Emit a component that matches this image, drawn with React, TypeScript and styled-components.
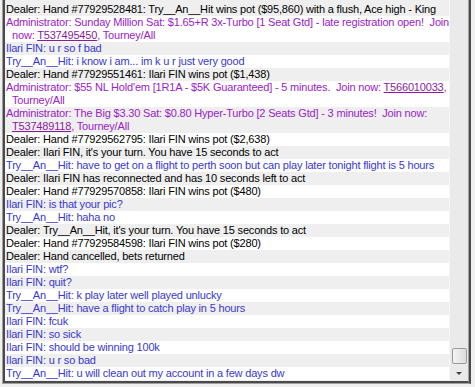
import React from "react";
import styled, { createGlobalStyle } from "styled-components";

const Global = createGlobalStyle`
  html, body { margin: 0; padding: 0; background: #f0f0f0; }
  body { width: 475px; height: 387px; overflow: hidden; }
`;

const Page = styled.div`
  width: 475px;
  height: 387px;
  padding-left: 2px;
  box-sizing: border-box;
  background: #f0f0f0;
`;

const Frame = styled.div`
  width: 469px;
  height: 384px;
  box-sizing: border-box;
  border-left: 1px solid #a0a0a0;
  border-right: 2px solid #4a4a4a;
  border-bottom: 1px solid #a0a0a0;
  display: flex;
`;

const Inner = styled.div`
  flex: 1;
  display: flex;
  box-sizing: border-box;
  border-left: 2px solid #4a4a4a;
  border-right: 1px solid #a0a0a0;
  border-bottom: 2px solid #4a4a4a;
  min-width: 0;
`;

const ChatList = styled.div`
  flex: 1;
  min-width: 0;
  overflow: hidden;
  display: flex;
  flex-direction: column;
  font-family: "Liberation Sans", Arial, sans-serif;
  font-size: 11px;
  letter-spacing: -0.18px;
  line-height: 13px;
`;

const Entry = styled.div<{ $shade: boolean; $color: string; $first?: boolean }>`
  background: ${(p) => (p.$shade ? "#efefef" : "#ffffff")};
  color: ${(p) => p.$color};
  padding: ${(p) => (p.$first ? "3px" : "0")} 0 0 1px;
  white-space: pre;
`;

const Line = styled.div<{ $indent?: boolean }>`
  height: 13px;
  padding-left: ${(p) => (p.$indent ? "6px" : "0")};
`;

const Link = styled.span`
  color: #8a1a9e;
  text-decoration: underline;
`;

const Scrollbar = styled.div`
  width: 18px;
  display: flex;
  flex-direction: column;
  background: #eaeaea;
  border-left: 1px solid #f6f6f6;
`;

const Track = styled.div`
  flex: 1;
  display: flex;
  flex-direction: column;
  justify-content: flex-end;
  align-items: center;
`;

const Thumb = styled.div`
  width: 13px;
  height: 14px;
  border: 1px solid #9a9a9a;
  border-radius: 2px;
  background: linear-gradient(to right, #f4f4f4, #dcdcdc);
`;

const ArrowButton = styled.div`
  height: 17px;
  display: flex;
  align-items: center;
  justify-content: center;
`;

const Arrow = styled.div`
  width: 0;
  height: 0;
  border-left: 3px solid transparent;
  border-right: 3px solid transparent;
  border-top: 3px solid #404040;
  margin-top: 2px;
`;

const DEALER = "#000000";
const ADMIN = "#9a22c8";
const PLAYER = "#3838d0";

type Msg = { color: string; lines: React.ReactNode[] };

const msgs: Msg[] = [
  { color: DEALER, lines: ["Dealer: Hand #77929528481: Try__An__Hit wins pot ($95,860) with a flush, Ace high - King"] },
  {
    color: ADMIN,
    lines: [
      "Administrator: Sunday Million Sat: $1.65+R 3x-Turbo [1 Seat Gtd] - late registration open!  Join",
      <>now: <Link>T537495450</Link>, Tourney/All</>,
    ],
  },
  { color: PLAYER, lines: ["Ilari FIN: u r so f bad"] },
  { color: PLAYER, lines: ["Try__An__Hit: i know i am... im k u r just very good"] },
  { color: DEALER, lines: ["Dealer: Hand #77929551461: Ilari FIN wins pot ($1,438)"] },
  {
    color: ADMIN,
    lines: [
      <>Administrator: $55 NL Hold'em [1R1A - $5K Guaranteed] - 5 minutes.  Join now: <Link>T566010033</Link>,</>,
      "Tourney/All",
    ],
  },
  {
    color: ADMIN,
    lines: [
      "Administrator: The Big $3.30 Sat: $0.80 Hyper-Turbo [2 Seats Gtd] - 3 minutes!  Join now:",
      <><Link>T537489118</Link>, Tourney/All</>,
    ],
  },
  { color: DEALER, lines: ["Dealer: Hand #77929562795: Ilari FIN wins pot ($2,638)"] },
  { color: DEALER, lines: ["Dealer: Ilari FIN, it's your turn. You have 15 seconds to act"] },
  { color: PLAYER, lines: ["Try__An__Hit: have to get on a flight to perth soon but can play later tonight flight is 5 hours"] },
  { color: DEALER, lines: ["Dealer: Ilari FIN has reconnected and has 10 seconds left to act"] },
  { color: DEALER, lines: ["Dealer: Hand #77929570858: Ilari FIN wins pot ($480)"] },
  { color: PLAYER, lines: ["Ilari FIN: is that your pic?"] },
  { color: PLAYER, lines: ["Try__An__Hit: haha no"] },
  { color: DEALER, lines: ["Dealer: Try__An__Hit, it's your turn. You have 15 seconds to act"] },
  { color: DEALER, lines: ["Dealer: Hand #77929584598: Ilari FIN wins pot ($280)"] },
  { color: DEALER, lines: ["Dealer: Hand cancelled, bets returned"] },
  { color: PLAYER, lines: ["Ilari FIN: wtf?"] },
  { color: PLAYER, lines: ["Ilari FIN: quit?"] },
  { color: PLAYER, lines: ["Try__An__Hit: k play later well played unlucky"] },
  { color: PLAYER, lines: ["Try__An__Hit: have a flight to catch play in 5 hours"] },
  { color: PLAYER, lines: ["Ilari FIN: fcuk"] },
  { color: PLAYER, lines: ["Ilari FIN: so sick"] },
  { color: PLAYER, lines: ["Ilari FIN: should be winning 100k"] },
  { color: PLAYER, lines: ["Ilari FIN: u r so bad"] },
  { color: PLAYER, lines: ["Try__An__Hit: u will clean out my account in a few days dw"] },
];

export default function App() {
  return (
    <>
      <Global />
      <Page>
        <Frame>
          <Inner>
            <ChatList>
              {msgs.map((m, i) => (
                <Entry key={i} $shade={i % 2 === 0} $color={m.color} $first={i === 0}>
                  {m.lines.map((l, j) => (
                    <Line key={j} $indent={j > 0}>
                      {l}
                    </Line>
                  ))}
                </Entry>
              ))}
            </ChatList>
            <Scrollbar>
              <Track>
                <Thumb />
              </Track>
              <ArrowButton>
                <Arrow />
              </ArrowButton>
            </Scrollbar>
          </Inner>
        </Frame>
      </Page>
    </>
  );
}
